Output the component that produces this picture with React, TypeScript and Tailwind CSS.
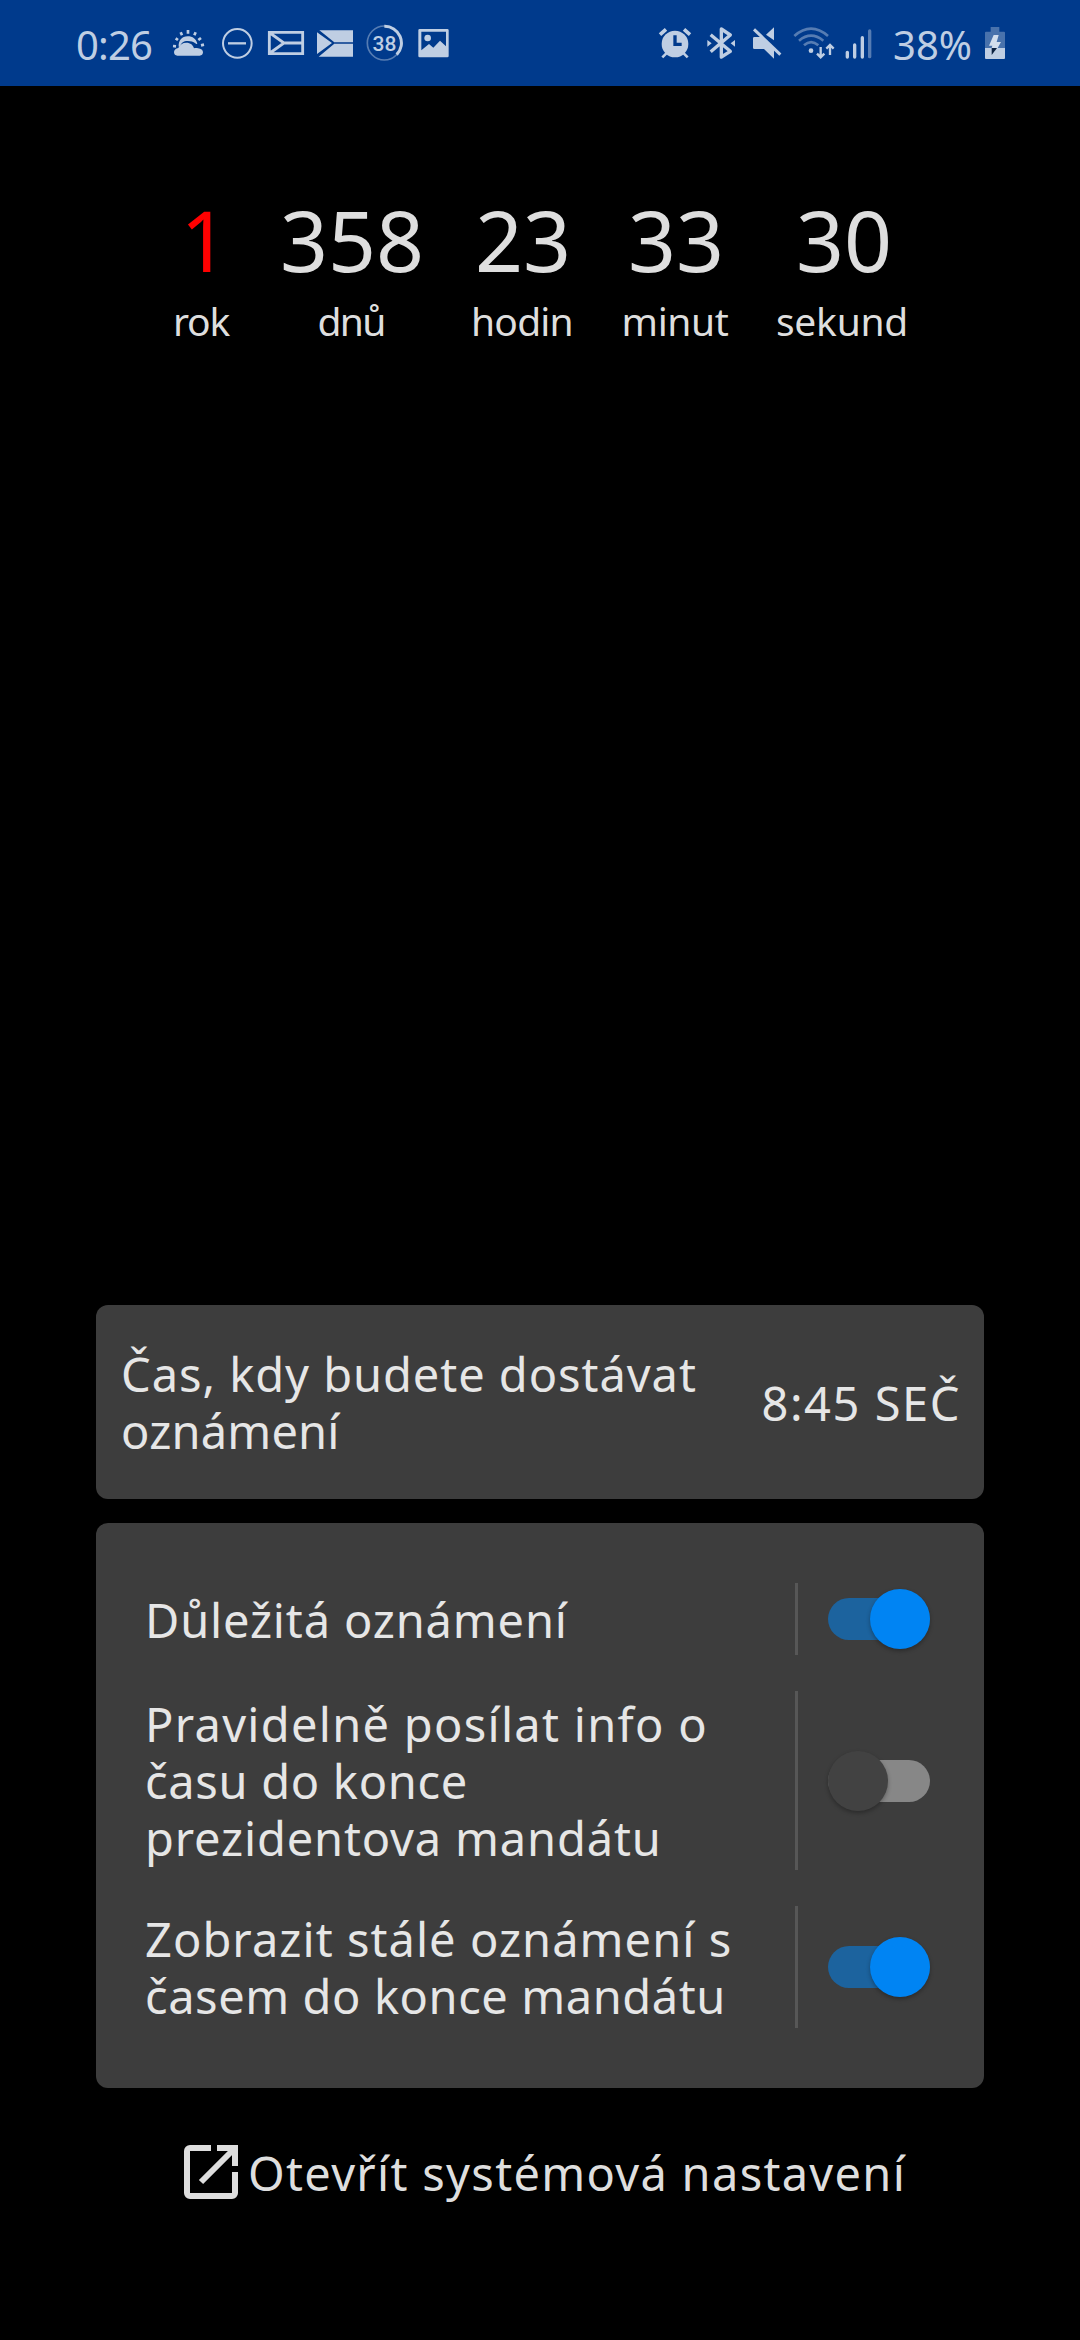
import React from "react";

type IconProps = { box: string; className: string; children: React.ReactNode };

function StatusIcon({ box, className, children }: IconProps) {
  return (
    <svg viewBox={box} className={`shrink-0 ${className}`} fill="#bfcee3" stroke="none">
      {children}
    </svg>
  );
}

const line = { stroke: "#bfcee3", fill: "none" };

function StatusBar() {
  return (
    <header className="flex h-[86px] items-start justify-between bg-[#003a8c] pr-[74px] pl-[76px] text-[#bfcee3]">
      <div className="flex h-[86px] items-center">
        <div className="mt-[3px] w-[96px] text-[40px] leading-[58px] tracking-[-0.8px] whitespace-nowrap">0:26</div>
        {/* partly cloudy */}
        <StatusIcon box="336 0 102 258" className="h-[86px] w-[34px]">
          <path d="M342 157c0-7 5-12 13-13 4-10 13-16 24-16 12 0 21 7 23 17 4-1 8-1 12 0 9 1 15 5 15 12 0 6-4 10-10 10h-67c-6 0-10-4-10-10z" />
          <path d="M356 140c-1-18 9-31 27-31 15 0 26 8 29 22-2 2-4 1-6-1-7-6-17-8-28-7-8 1-14 5-18 16z" />
          <path d="M339 138l9 1M347 115l7 5M362 97l4 9M384 90v11M407 97l-4 9M423 114l-8 6M432 134l-9 2" stroke="#bfcee3" strokeWidth="8" />
        </StatusIcon>
        {/* do not disturb */}
        <StatusIcon box="480 0 105 258" className="ml-[14px] h-[86px] w-[35px]">
          <circle cx="532" cy="130" r="43" {...line} strokeWidth="6" />
          <path d="M504 130h54" {...line} strokeWidth="7" />
        </StatusIcon>
        {/* outlined flag */}
        <StatusIcon box="51 0 114 258" className="ml-[12px] h-[86px] w-[38px]">
          <path d="M58 97h100v64H58zM60 99l42 30-42 30M102 129h56" {...line} strokeWidth="8.5" />
        </StatusIcon>
        {/* solid flag */}
        <StatusIcon box="198 0 114 258" className="ml-[11px] h-[86px] w-[38px]">
          <path d="M208 91h101v35h-57zM201 97l45 32-45 33zM252 132h57v38H206z" />
          <path d="M252 129h57" {...line} strokeOpacity="0.3" strokeWidth="5" />
        </StatusIcon>
        {/* progress ring */}
        <div className="relative ml-[12px] h-[86px] w-[37px]">
          <StatusIcon box="348 0 111 258" className="h-[86px] w-[37px]">
            <circle cx="403" cy="129" r="51" {...line} strokeOpacity="0.45" strokeWidth="5" />
            <path d="M403 79a50 50 0 0 1 37 85" {...line} strokeWidth="9" />
          </StatusIcon>
          <div className="absolute inset-x-0 top-[30px] text-center font-[Roboto] text-[21px] leading-[28px] font-medium">38</div>
        </div>
        {/* picture */}
        <StatusIcon box="501 0 99 258" className="ml-[14px] h-[86px] w-[33px]">
          <path fillRule="evenodd" d="M509 87h83a4 4 0 0 1 4 4v77a4 4 0 0 1-4 4h-83a4 4 0 0 1-4-4V91a4 4 0 0 1 4-4zM514 95v56l23-19 13 11 20-21 18 17V95z" />
          <circle cx="533" cy="114" r="10" />
        </StatusIcon>
      </div>

      <div className="flex h-[86px] items-center">
        {/* alarm */}
        <StatusIcon box="51 0 108 258" className="h-[86px] w-[36px]">
          <circle cx="105" cy="132" r="40" />
          <path d="M60 104l18-16M150 104l-18-16" stroke="#bfcee3" strokeWidth="11" />
          <path d="M79 160l-12 12M131 160l12 12" stroke="#bfcee3" strokeWidth="8" />
          <path d="M105 106v27h20" fill="none" stroke="#003a8c" strokeWidth="10" />
        </StatusIcon>
        {/* bluetooth */}
        <StatusIcon box="198 0 90 258" className="ml-[13px] h-[86px] w-[30px]">
          <path d="M212 104l59 50-27 17V87l27 18-59 50" {...line} strokeWidth="10" strokeLinejoin="round" />
          <path d="M202 120l13 10-13 10zM285 120l-13 10 13 10z" />
        </StatusIcon>
        {/* muted speaker */}
        <StatusIcon box="333 0 96 258" className="ml-[15px] h-[86px] w-[32px]">
          <path d="M343 111h26l33 33v32l-30-29h-29a4 4 0 0 1-4-4v-28a4 4 0 0 1 4-4zM378 104l24-22v39z" />
          <path d="M342 88l79 76" stroke="#bfcee3" strokeWidth="9" />
        </StatusIcon>
        {/* wifi with traffic arrows */}
        <StatusIcon box="456 0 132 258" className="ml-[9px] h-[86px] w-[44px]">
          <path d="M463 108q50-44 101 0M477 122q36-30 73 0M492 136q21-19 43 0" {...line} strokeOpacity="0.45" strokeWidth="8" />
          <circle cx="513" cy="152" r="7" />
          <path d="M542 141v31M531 161l11 11 11-11M570 165v-30M559 146l11-11 11 11" {...line} strokeWidth="7" />
        </StatusIcon>
        {/* signal */}
        <StatusIcon box="612 0 87 258" className="ml-[8px] h-[86px] w-[29px]">
          <path d="M622 157v14M644 135v36M667 113v58" {...line} strokeWidth="10" strokeLinecap="round" />
          <path d="M689 93v77" {...line} strokeOpacity="0.45" strokeWidth="10" strokeLinecap="round" />
        </StatusIcon>
        <div className="mt-[3px] ml-[20px] w-[91px] text-[40px] leading-[58px] whitespace-nowrap">38%</div>
        {/* battery */}
        <StatusIcon box="372 0 66 258" className="h-[86px] w-[22px]">
          <path d="M392 81h26v14h14a3 3 0 0 1 3 3v46h-60V98a3 3 0 0 1 3-3h14z" fillOpacity="0.38" />
          <path d="M375 144h60v30a3 3 0 0 1-3 3h-54a3 3 0 0 1-3-3z" />
          <path d="M401 105h15l-6 21h13l-10 18h-18l2-7h-10z" fill="#d3deed" />
          <path d="M395 144h16l-16 21z" fill="#0b2140" />
        </StatusIcon>
      </div>
    </header>
  );
}

const units = [
  { value: "1", label: "rok", cell: "w-[102px]", number: "pl-[7px] text-[#ff0000]", spacing: "tracking-[-1.3px]" },
  { value: "358", label: "dnů", cell: "w-[198px]", number: "pl-[2px]", spacing: "tracking-[-1.7px]" },
  { value: "23", label: "hodin", cell: "w-[144px]", number: "pl-[2px]", spacing: "tracking-[-0.8px]" },
  { value: "33", label: "minut", cell: "w-[162px]", number: "pl-[2px]", spacing: "tracking-[-0.4px]" },
  { value: "30", label: "sekund", cell: "w-[172px]", number: "pl-[4px]", spacing: "tracking-[-0.25px]" },
];

function Countdown() {
  return (
    <section className="flex pt-[97px] pl-[150px] text-center text-[#dedede]">
      {units.map((u) => (
        <div key={u.label} className={u.cell}>
          <div className={`text-[84px] leading-[114px] ${u.number}`}>{u.value}</div>
          <div className={`mt-[-4px] text-[39px] leading-[56px] ${u.spacing}`}>{u.label}</div>
        </div>
      ))}
    </section>
  );
}

function Toggle({ on }: { on: boolean }) {
  return (
    <div
      role="switch"
      aria-checked={on}
      className={`flex h-[42px] w-[102px] items-center rounded-full ${on ? "justify-end bg-[#1c639e]" : "justify-start bg-[#878787]"}`}
    >
      <div
        className={`size-[60px] shrink-0 rounded-full shadow-[0_2px_4px_rgba(0,0,0,0.3)] ${on ? "bg-[#0084f3]" : "bg-[#424242]"}`}
      />
    </div>
  );
}

const settings = [
  { on: true, row: "h-[72px]", lines: [{ text: "Důležitá oznámení", spacing: "tracking-[0.85px]" }] },
  {
    on: false,
    row: "h-[179px]",
    lines: [
      { text: "Pravidelně posílat info o", spacing: "tracking-[1.29px]" },
      { text: "času do konce", spacing: "tracking-[0.7px]" },
      { text: "prezidentova mandátu", spacing: "tracking-[0.85px]" },
    ],
  },
  {
    on: true,
    row: "h-[122px]",
    lines: [
      { text: "Zobrazit stálé oznámení s", spacing: "tracking-[1.05px]" },
      { text: "časem do konce mandátu", spacing: "tracking-[0.58px]" },
    ],
  },
];

export default function App() {
  return (
    <div className="flex h-[2340px] w-[1080px] flex-col overflow-hidden bg-black font-['Noto_Sans',sans-serif] text-[47px] text-[#e6e6e6]">
      <StatusBar />
      <Countdown />

      <main className="mt-auto flex flex-col px-24 pb-[132px]">
        <section className="flex h-[194px] items-center justify-between rounded-xl bg-[#3d3d3d] pr-[23px] pl-[25px]">
          <div className="pt-[2px] leading-[57px] whitespace-nowrap">
            <div className="tracking-[0.95px]">Čas, kdy budete dostávat</div>
            <div className="tracking-[0.2px]">oznámení</div>
          </div>
          <div className="mt-[2px] leading-[57px] tracking-[1.55px] whitespace-nowrap">8:45 SEČ</div>
        </section>

        <section className="mt-6 flex flex-col gap-9 rounded-xl bg-[#3d3d3d] py-[60px] pr-[54px] pl-[49px]">
          {settings.map((s) => (
            <div key={s.lines[0].text} className={`flex items-center ${s.row}`}>
              <div className="flex-1 pt-[2px] leading-[57px] whitespace-nowrap">
                {s.lines.map((l) => (
                  <div key={l.text} className={l.spacing}>{l.text}</div>
                ))}
              </div>
              <div className="mr-[30px] w-[3px] self-stretch bg-[#575757]" />
              <Toggle on={s.on} />
            </div>
          ))}
        </section>

        <section className="mt-12 flex h-[72px] items-center pl-[88px] text-[#dedede]">
          <svg viewBox="0 0 54 54" className="h-[54px] w-[54px] shrink-0" fill="none" stroke="currentColor" strokeWidth="6">
            <path d="M27 3H6a3 3 0 0 0-3 3v42a3 3 0 0 0 3 3h42a3 3 0 0 0 3-3V27" />
            <path d="M33 3h18v18M50 4L17 37" />
          </svg>
          <div className="mt-[2px] ml-[10px] leading-[57px] tracking-[1.3px] whitespace-nowrap">Otevřít systémová nastavení</div>
        </section>
      </main>
    </div>
  );
}
